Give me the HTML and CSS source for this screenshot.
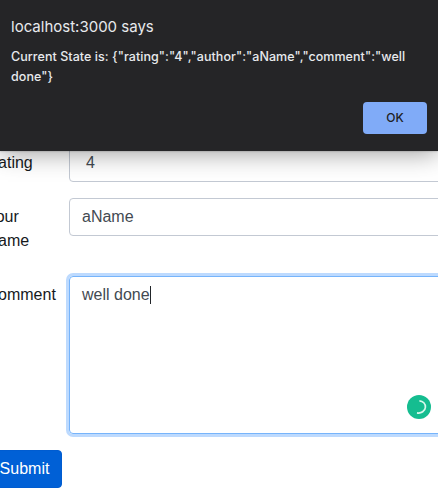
FILE: index.html
```html
<!DOCTYPE html>
<html lang="en">
<head>
<meta charset="utf-8">
<title>Comment form</title>
<link rel="stylesheet" href="styles.css">
</head>
<body>
<section class="dialog">
  <h1 class="dialog-title">localhost:3000 says</h1>
  <p class="dialog-text">Current State is: {"rating":"4","author":"aName","comment":"well<br>done"}</p>
  <button class="ok">OK</button>
</section>
<main class="form">
  <div class="row rating-row"><div class="label">Rating</div><div class="control select">4</div></div>
  <div class="row name-row"><div class="label">Your Name</div><div class="control">aName</div></div>
  <div class="row"><div class="label">Comment</div>
    <div class="control comment"><span class="typed">well done</span><span class="caret"></span>
      <svg class="badge" viewBox="0 0 24 24"><circle cx="12" cy="12" r="12" fill="#15bd90"/><path d="M12.4 5.8C16 6 18.6 8.6 18.4 12.2C18.2 16 14.2 18.7 10 17.9" fill="none" stroke="#d8f8ec" stroke-width="1.7"/></svg>
    </div>
  </div>
  <button class="submit">Submit</button>
</main>
</body>
</html>
```
FILE: styles.css
```css
* { box-sizing: border-box; }
body {
  margin: 0;
  height: 499px;
  overflow: hidden;
  background: #fff;
  color: #212529;
  font: 16px/24px "Liberation Sans", Arial, sans-serif;
}
.dialog {
  position: relative;
  z-index: 1;
  display: flex;
  flex-direction: column;
  height: 151px;
  padding: 17px 11px;
  background: #252527;
  color: #e8eaed;
  font-family: Inter, sans-serif;
  box-shadow: 0 2px 24px rgba(0, 0, 0, .4), 0 0 2px rgba(0, 0, 0, .3);
}
.dialog-title {
  margin: 0;
  font-size: 15px;
  line-height: 20px;
  font-weight: 400;
  white-space: nowrap;
}
.dialog-text {
  margin: 10px 0 0;
  font-size: 12.5px;
  line-height: 20px;
  font-weight: 450;
  letter-spacing: .06px;
  white-space: nowrap;
}
.ok {
  align-self: flex-end;
  width: 64px;
  height: 32px;
  margin-top: 15px;
  padding: 0;
  border: 0;
  border-radius: 4px;
  background: #80abf8;
  color: #202124;
  font: 500 12px/32px Inter, sans-serif;
}
.form {
  display: flex;
  flex-direction: column;
  align-items: flex-start;
  gap: 16px;
  width: 466px;
  margin: -7px 0 0 -14px;
}
.row {
  display: grid;
  grid-template-columns: 83px 1fr;
  align-items: start;
  width: 100%;
}
.name-row { height: 62px; }
.label { width: 71px; padding: 7px 0 0 .5px; color: #16191c; }
.name-row .label { width: 53px; }
.control {
  height: 38px;
  padding: 6px 12px;
  border: 1px solid #c3c9d3;
  border-radius: 4px;
  color: #434a52;
}
.select { padding-left: 16px; }
.comment {
  position: relative;
  display: flex;
  align-items: flex-start;
  height: 158px;
  border-color: #76b4fb;
  box-shadow: 0 0 0 3px #bddafe;
}
.caret { width: 1px; height: 18px; margin-top: 3px; background: #212529; }
.badge { position: absolute; left: 337px; top: 118px; width: 24px; height: 24px; }
.submit {
  width: 76px;
  height: 38px;
  padding: 0 0 0 1px;
  border: 1px solid #005cd0;
  border-radius: 4px;
  background: #0060d6;
  color: #fff;
  font: 16px/24px "Liberation Sans", Arial, sans-serif;
}
```
